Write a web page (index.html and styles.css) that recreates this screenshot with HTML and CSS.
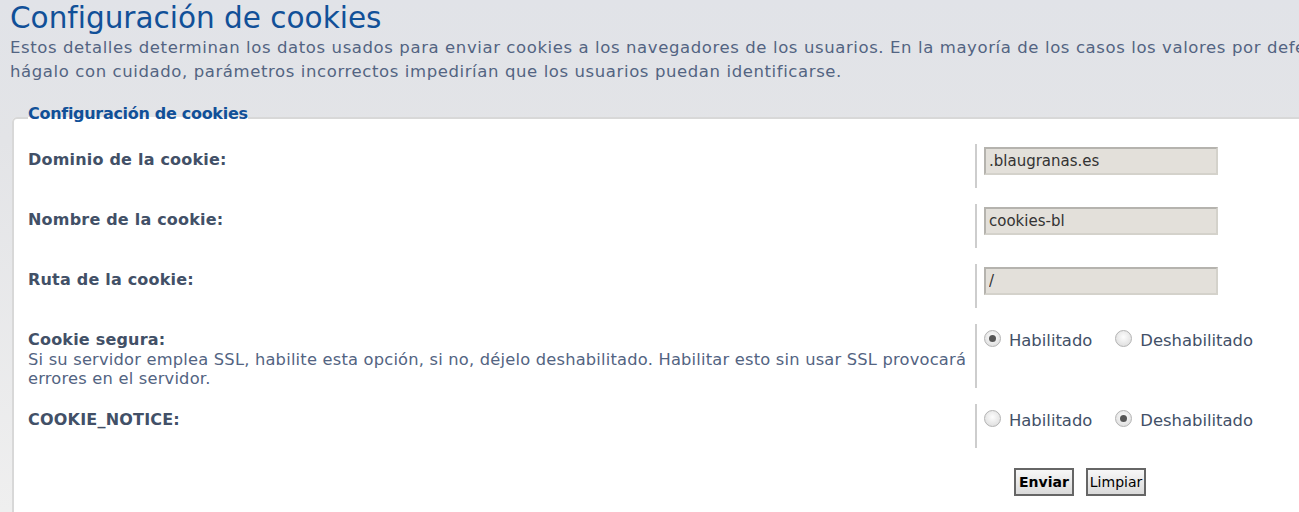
FILE: index.html
```html
<!DOCTYPE html>
<html lang="es">
<head>
<meta charset="utf-8">
<title>Configuración de cookies</title>
<link rel="stylesheet" href="styles.css">
</head>
<body>
<div class="main">
  <h1 class="title">Configuración de cookies</h1>
  <p class="intro">Estos detalles determinan los datos usados para enviar cookies a los navegadores de los usuarios. En la mayoría de los casos los valores por defecto de estos parámetros de cookies deberían ser suficientes. Si necesita cambiar algo<br>hágalo con cuidado, parámetros incorrectos impedirían que los usuarios puedan identificarse.</p>

  <form class="form">
    <fieldset class="box">
      <legend class="legend">Configuración de cookies</legend>

      <div class="row">
        <div class="dt"><label class="label">Dominio de la cookie:</label></div>
        <div class="dd"><input class="text" type="text" value=".blaugranas.es"></div>
      </div>

      <div class="row">
        <div class="dt"><label class="label">Nombre de la cookie:</label></div>
        <div class="dd"><input class="text" type="text" value="cookies-bl"></div>
      </div>

      <div class="row">
        <div class="dt"><label class="label">Ruta de la cookie:</label></div>
        <div class="dd"><input class="text" type="text" value="/"></div>
      </div>

      <div class="row">
        <div class="dt"><label class="label">Cookie segura:</label><span class="explain">Si su servidor emplea SSL, habilite esta opción, si no, déjelo deshabilitado. Habilitar esto sin usar SSL provocará errores en el servidor.</span></div>
        <div class="dd">
          <label class="opt"><span class="radio on"></span>Habilitado</label>
          <label class="opt"><span class="radio"></span>Deshabilitado</label>
        </div>
      </div>

      <div class="row">
        <div class="dt"><label class="label">COOKIE_NOTICE:</label></div>
        <div class="dd">
          <label class="opt"><span class="radio"></span>Habilitado</label>
          <label class="opt"><span class="radio on"></span>Deshabilitado</label>
        </div>
      </div>

      <div class="submit">
        <button class="btn primary" type="button">Enviar</button>
        <button class="btn" type="button">Limpiar</button>
      </div>
    </fieldset>
  </form>
</div>
</body>
</html>
```

FILE: styles.css
```css
html, body {
  margin: 0;
  padding: 0;
  overflow: hidden;
  height: 100%;
}
body {
  background: linear-gradient(#e1e3e8 0, #e3e4e7 140px, #efefef 512px);
  font-family: "DejaVu Sans", Verdana, sans-serif;
  color: #425067;
}
.main {
  width: 1900px;
  padding: 0 0 0 10px;
}
.title {
  margin: 0;
  font-family: "DejaVu Sans", Verdana, sans-serif;
  font-weight: normal;
  font-size: 29.5px;
  line-height: 36px;
  color: #115098;
}
.intro {
  margin: 0;
  font-size: 16.5px;
  letter-spacing: 0.6px;
  line-height: 24px;
  white-space: nowrap;
  color: #536482;
}
.form {
  margin: 20px 0 0 2px;
}
.box {
  margin: 0;
  padding: 12px 0 30px 14px;
  width: 1700px;
  background: #fff;
  border: 2px solid #d8d8d8;
  border-radius: 5px;
}
.legend {
  padding: 0 0 8px 0;
  font-size: 16px;
  line-height: 20px;
  letter-spacing: -0.3px;
  font-weight: bold;
  color: #115098;
}
.row {
  display: flex;
  align-items: stretch;
  margin-bottom: 16px;
}
.dt {
  width: 947px;
  flex: none;
  padding-top: 6px;
}
.label {
  display: block;
  font-weight: bold;
  font-size: 16px;
  letter-spacing: 0.2px;
  line-height: 20px;
}
.explain {
  display: block;
  width: 945px;
  font-size: 16.3px;
  letter-spacing: 0.2px;
  line-height: 19px;
  color: #536482;
}
.dd {
  border-left: 2px solid #cdcdcd;
  padding: 3px 0 13px 7px;
  min-height: 28px;
  display: flex;
  align-items: flex-start;
  gap: 23px;
}
.text {
  box-sizing: border-box;
  width: 234px;
  height: 28px;
  margin: 0;
  padding: 0 3px;
  background: #e3e0da;
  border: 2px solid;
  border-color: #b5b3ae #d4d2cb #d4d2cb #b5b3ae;
  font-family: "DejaVu Sans", Verdana, sans-serif;
  font-size: 15px;
  color: #333;
}
.opt {
  display: flex;
  align-items: center;
  gap: 8px;
  height: 26px;
  font-size: 16.4px;
  color: #425067;
}
.radio {
  width: 15px;
  height: 15px;
  margin-top: -3px;
  border-radius: 50%;
  border: 1px solid #b3b3b3;
  background: radial-gradient(circle at 50% 40%, #fdfdfd, #d8d8d8);
  position: relative;
}
.radio.on::after {
  content: "";
  position: absolute;
  left: 4px;
  top: 4px;
  width: 7px;
  height: 7px;
  border-radius: 50%;
  background: #555;
}
.submit {
  display: flex;
  gap: 12px;
  margin: 20px 0 0 986px;
}
.btn {
  height: 28px;
  padding: 0 2px;
  border: 2px solid #666;
  background: linear-gradient(#f7f7f7, #dadada);
  font-family: "DejaVu Sans", Verdana, sans-serif;
  font-size: 14px;
  color: #000;
}
.btn.primary { font-weight: bold; padding: 0 3px; }
```
